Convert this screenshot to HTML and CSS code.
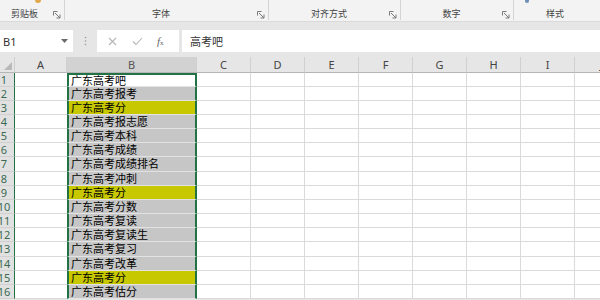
FILE: index.html
```html
<!DOCTYPE html>
<html>
<head>
<meta charset="utf-8">
<link rel="stylesheet" href="styles.css">
</head>
<body>
<div class="ribbon">
  <div class="grp g1">
    <div class="icons"><span class="ico-clip"></span></div>
    <div class="lab"><span class="t">剪贴板</span><svg class="launch" width="8" height="8" viewBox="0 0 8 8"><path d="M0.5 4.5V0.5H4.5M2 2L7 7M7 3.5V7H3.5" fill="none" stroke="#7a7a7a" stroke-width="1"/></svg></div>
  </div>
  <div class="grp g2">
    <div class="icons"></div>
    <div class="lab"><span class="t">字体</span><svg class="launch" width="8" height="8" viewBox="0 0 8 8"><path d="M0.5 4.5V0.5H4.5M2 2L7 7M7 3.5V7H3.5" fill="none" stroke="#7a7a7a" stroke-width="1"/></svg></div>
  </div>
  <div class="grp g3">
    <div class="icons"></div>
    <div class="lab"><span class="t">对齐方式</span><svg class="launch" width="8" height="8" viewBox="0 0 8 8"><path d="M0.5 4.5V0.5H4.5M2 2L7 7M7 3.5V7H3.5" fill="none" stroke="#7a7a7a" stroke-width="1"/></svg></div>
  </div>
  <div class="grp g4">
    <div class="icons"></div>
    <div class="lab"><span class="t">数字</span><svg class="launch" width="8" height="8" viewBox="0 0 8 8"><path d="M0.5 4.5V0.5H4.5M2 2L7 7M7 3.5V7H3.5" fill="none" stroke="#7a7a7a" stroke-width="1"/></svg></div>
  </div>
  <div class="grp g5">
    <div class="icons"><span class="ico-style"></span></div>
    <div class="lab"><span class="t">样式</span></div>
  </div>
</div>

<div class="fbar">
  <div class="namebox"><span class="nm">B1</span><svg width="7" height="4" viewBox="0 0 7 4"><path d="M0 0H7L3.5 4Z" fill="#6b6b6b"/></svg></div>
  <div class="dots"><svg width="3" height="10" viewBox="0 0 3 10"><circle cx="1.5" cy="1.5" r="0.8" fill="#9a9a9a"/><circle cx="1.5" cy="5" r="0.8" fill="#9a9a9a"/><circle cx="1.5" cy="8.5" r="0.8" fill="#9a9a9a"/></svg></div>
  <div class="fbtns">
    <svg width="9" height="9" viewBox="0 0 9 9"><path d="M1 1L8 8M8 1L1 8" stroke="#b5b5b5" stroke-width="1.1" fill="none"/></svg>
    <svg width="11" height="9" viewBox="0 0 11 9"><path d="M1 4.5L4 7.5L10 1" stroke="#b5b5b5" stroke-width="1.1" fill="none"/></svg>
    <span class="fx"><i>f</i><span class="sx">x</span></span>
  </div>
  <div class="finput">高考吧</div>
</div>

<div class="sheet">
  <div class="corner"><svg width="8" height="8" viewBox="0 0 8 8"><path d="M8 0V8H0Z" fill="#b9b9b9"/></svg></div>
  <div class="ch">A</div><div class="ch chb">B</div><div class="ch">C</div><div class="ch">D</div><div class="ch">E</div><div class="ch">F</div><div class="ch">G</div><div class="ch">H</div><div class="ch">I</div><div class="ch">J</div>

  <div class="rh"><span>1</span></div><div class="c a"></div><div class="c b b1">广东高考吧</div><div class="c"></div><div class="c"></div><div class="c"></div><div class="c"></div><div class="c"></div><div class="c"></div><div class="c"></div><div class="c"></div>
  <div class="rh"><span>2</span></div><div class="c a"></div><div class="c b">广东高考报考</div><div class="c"></div><div class="c"></div><div class="c"></div><div class="c"></div><div class="c"></div><div class="c"></div><div class="c"></div><div class="c"></div>
  <div class="rh"><span>3</span></div><div class="c a"></div><div class="c b y">广东高考分</div><div class="c"></div><div class="c"></div><div class="c"></div><div class="c"></div><div class="c"></div><div class="c"></div><div class="c"></div><div class="c"></div>
  <div class="rh"><span>4</span></div><div class="c a"></div><div class="c b">广东高考报志愿</div><div class="c"></div><div class="c"></div><div class="c"></div><div class="c"></div><div class="c"></div><div class="c"></div><div class="c"></div><div class="c"></div>
  <div class="rh"><span>5</span></div><div class="c a"></div><div class="c b">广东高考本科</div><div class="c"></div><div class="c"></div><div class="c"></div><div class="c"></div><div class="c"></div><div class="c"></div><div class="c"></div><div class="c"></div>
  <div class="rh"><span>6</span></div><div class="c a"></div><div class="c b">广东高考成绩</div><div class="c"></div><div class="c"></div><div class="c"></div><div class="c"></div><div class="c"></div><div class="c"></div><div class="c"></div><div class="c"></div>
  <div class="rh"><span>7</span></div><div class="c a"></div><div class="c b">广东高考成绩排名</div><div class="c"></div><div class="c"></div><div class="c"></div><div class="c"></div><div class="c"></div><div class="c"></div><div class="c"></div><div class="c"></div>
  <div class="rh"><span>8</span></div><div class="c a"></div><div class="c b">广东高考冲刺</div><div class="c"></div><div class="c"></div><div class="c"></div><div class="c"></div><div class="c"></div><div class="c"></div><div class="c"></div><div class="c"></div>
  <div class="rh"><span>9</span></div><div class="c a"></div><div class="c b y">广东高考分</div><div class="c"></div><div class="c"></div><div class="c"></div><div class="c"></div><div class="c"></div><div class="c"></div><div class="c"></div><div class="c"></div>
  <div class="rh"><span>10</span></div><div class="c a"></div><div class="c b">广东高考分数</div><div class="c"></div><div class="c"></div><div class="c"></div><div class="c"></div><div class="c"></div><div class="c"></div><div class="c"></div><div class="c"></div>
  <div class="rh"><span>11</span></div><div class="c a"></div><div class="c b">广东高考复读</div><div class="c"></div><div class="c"></div><div class="c"></div><div class="c"></div><div class="c"></div><div class="c"></div><div class="c"></div><div class="c"></div>
  <div class="rh"><span>12</span></div><div class="c a"></div><div class="c b">广东高考复读生</div><div class="c"></div><div class="c"></div><div class="c"></div><div class="c"></div><div class="c"></div><div class="c"></div><div class="c"></div><div class="c"></div>
  <div class="rh"><span>13</span></div><div class="c a"></div><div class="c b">广东高考复习</div><div class="c"></div><div class="c"></div><div class="c"></div><div class="c"></div><div class="c"></div><div class="c"></div><div class="c"></div><div class="c"></div>
  <div class="rh"><span>14</span></div><div class="c a"></div><div class="c b">广东高考改革</div><div class="c"></div><div class="c"></div><div class="c"></div><div class="c"></div><div class="c"></div><div class="c"></div><div class="c"></div><div class="c"></div>
  <div class="rh"><span>15</span></div><div class="c a"></div><div class="c b y">广东高考分</div><div class="c"></div><div class="c"></div><div class="c"></div><div class="c"></div><div class="c"></div><div class="c"></div><div class="c"></div><div class="c"></div>
  <div class="rh"><span>16</span></div><div class="c a"></div><div class="c b">广东高考估分</div><div class="c"></div><div class="c"></div><div class="c"></div><div class="c"></div><div class="c"></div><div class="c"></div><div class="c"></div><div class="c"></div>
</div>
</body>
</html>
```

FILE: styles.css
```css
* { box-sizing: border-box; }
html, body {
  margin: 0;
  padding: 0;
  width: 600px;
  height: 300px;
  overflow: hidden;
  background: #e6e6e6;
  font-family: "Noto Sans", "Noto Sans CJK SC", sans-serif;
}

/* ribbon */
.ribbon {
  display: flex;
  height: 22px;
  background: #f3f3f3;
  border-bottom: 1px solid #dadada;
}
.grp {
  display: flex;
  flex-direction: column;
  height: 20px;
  border-right: 1px solid #d4d4d4;
}
.g1 { width: 65px; }
.g2 { width: 204px; }
.g3 { width: 132px; }
.g4 { width: 113px; }
.g5 { flex: 1; border-right: none; }
.icons {
  height: 6px;
  display: flex;
}
.ico-clip {
  width: 6px;
  height: 3px;
  margin-left: 35px;
  background: #e3a84a;
  border-radius: 0 0 3px 3px;
}
.ico-style {
  width: 4px;
  height: 3px;
  margin-left: 11px;
  background: #6f8fb5;
  border-radius: 0 0 2px 2px;
}
.lab {
  flex: 1;
  display: flex;
  align-items: center;
  padding-top: 4px;
}
.t {
  flex: 1;
  text-align: center;
  font-family: "Noto Sans CJK SC", sans-serif;
  font-size: 9px;
  color: #444;
  line-height: 12px;
}
.g1 .t { padding-right: 4px; }
.g5 .t { padding-right: 4px; }
.launch { margin-right: 3px; margin-top: 2px; }

/* formula bar */
.fbar {
  display: flex;
  align-items: stretch;
  height: 22px;
  margin-top: 8px;
}
.namebox {
  width: 73px;
  background: #fff;
  display: flex;
  align-items: center;
  justify-content: space-between;
  padding: 0 5px 0 3px;
}
.nm {
  font-size: 11px;
  color: #333;
}
.dots {
  width: 24px;
  display: flex;
  align-items: center;
  justify-content: center;
}
.fbtns {
  width: 82px;
  background: #fff;
  display: flex;
  align-items: center;
  padding-left: 11px;
  gap: 15px;
}
.fx {
  font-family: "Liberation Serif", serif;
  color: #666;
  font-size: 11px;
  margin-left: -1px;
}
.sx { font-size: 7px; font-style: normal; }
.finput {
  flex: 1;
  margin-left: 3px;
  background: #fff;
  font-family: "Noto Sans CJK SC", sans-serif;
  font-size: 11px;
  color: #333;
  line-height: 22px;
  padding-left: 8px;
}

/* sheet */
.sheet {
  margin-top: 5px;
  display: grid;
  grid-template-columns: 15px 52px 130px repeat(8, 54px);
  grid-template-rows: 15.5px repeat(16, 14.17px);
  width: 629px;
}
.corner {
  background: #e6e6e6;
  border-right: 1px solid #cfcfcf;
  border-bottom: 1px solid #b5b5b5;
  display: flex;
  align-items: flex-end;
  justify-content: flex-end;
  padding: 0 2px 2px 0;
}
.ch {
  background: #e6e6e6;
  border-right: 1px solid #d0d0d0;
  border-bottom: 1px solid #b5b5b5;
  text-align: center;
  font-size: 11px;
  line-height: 15px;
  color: #444;
}
.chb {
  background: #d2d2d2;
  color: #555;
}
.rh {
  background: #e1e1e1;
  border-right: 1px solid #217346;
  border-bottom: 1px solid #d0d0d0;
  overflow: hidden;
  display: flex;
}
.rh span {
  flex: none;
  width: 20px;
  margin-left: -6px;
  text-align: center;
  font-size: 11px;
  line-height: 14px;
  color: #3a6a52;
}
.c {
  background: #fff;
  border-right: 1px solid #dadada;
  border-bottom: 1px solid #dadada;
}
.a { border-right: none; }
.b {
  background: #c6c6c6;
  border-left: 2px solid #217346;
  border-right: 2px solid #217346;
  border-bottom: 1px solid #e2e2e2;
  font-family: "Noto Sans CJK SC", sans-serif;
  font-size: 11px;
  line-height: 13px;
  color: #000;
  padding-left: 2px;
  white-space: nowrap;
  overflow: hidden;
}
.b1 {
  background: #fff;
  border-top: 2px solid #217346;
  line-height: 11px;
}
.y { background: #c8c800; }
```
